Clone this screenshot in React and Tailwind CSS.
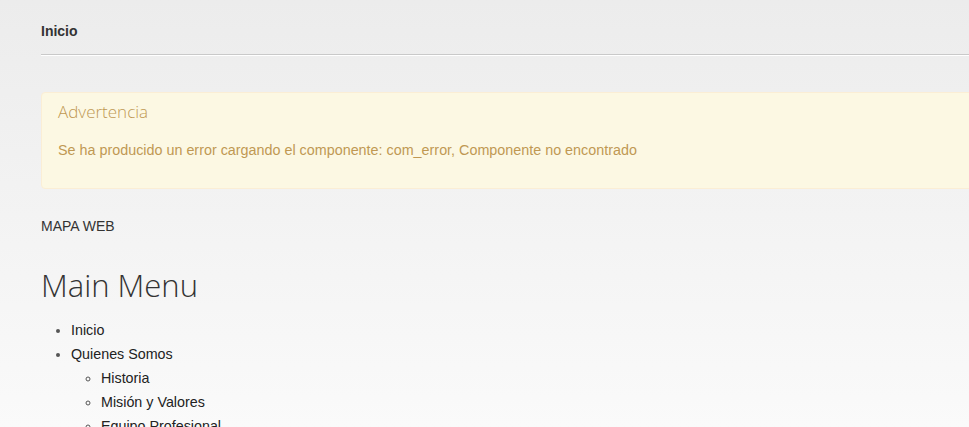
import React from 'react';

const menu = [
  { label: 'Inicio' },
  {
    label: 'Quienes Somos',
    children: ['Historia', 'Misión y Valores', 'Equipo Profesional', 'Instalaciones'],
  },
  { label: 'Servicios' },
];

const App = () => {
  return (
    <div className="h-screen overflow-hidden bg-gradient-to-b from-[#ececec] to-[#fafafa] font-['Liberation_Sans',Arial,sans-serif] text-[14px] text-[#333]">
      <div className="w-[1000px] pl-[41px]">
        {/* breadcrumb */}
        <div className="h-[55px] border-b border-[#c9c9c9] pt-[21px] shadow-[0_1px_0_#ffffff]">
          <span className="font-bold leading-[20px]">Inicio</span>
        </div>

        {/* warning */}
        <div className="mt-[37px] h-[97px] rounded-[4px] border border-[#fbeed5] bg-[#fcf8e3] pl-[16px] pt-[7px] text-[#c09853]">
          <h4 className="font-['Open_Sans',sans-serif] text-[17px] font-light leading-[24px]">Advertencia</h4>
          <p className="mt-[16px] text-[14.35px] leading-[20px]">
            Se ha producido un error cargando el componente: com_error, Componente no encontrado
          </p>
        </div>

        <div className="mt-[27px] leading-[20px]">MAPA WEB</div>

        <h2 className="mt-[29px] font-['Open_Sans',sans-serif] text-[31px] font-light leading-[40px] text-[#333]">
          Main Menu
        </h2>

        <ul className="mt-[13px] list-disc pl-[30px] text-[14.3px] leading-[24px] text-[#222] marker:text-[#555]">
          {menu.map((item) => (
            <li key={item.label}>
              {item.label}
              {item.children && (
                <ul className="list-[circle] pl-[30px]">
                  {item.children.map((c) => (
                    <li key={c}>{c}</li>
                  ))}
                </ul>
              )}
            </li>
          ))}
        </ul>
      </div>
    </div>
  );
};

export default App;
